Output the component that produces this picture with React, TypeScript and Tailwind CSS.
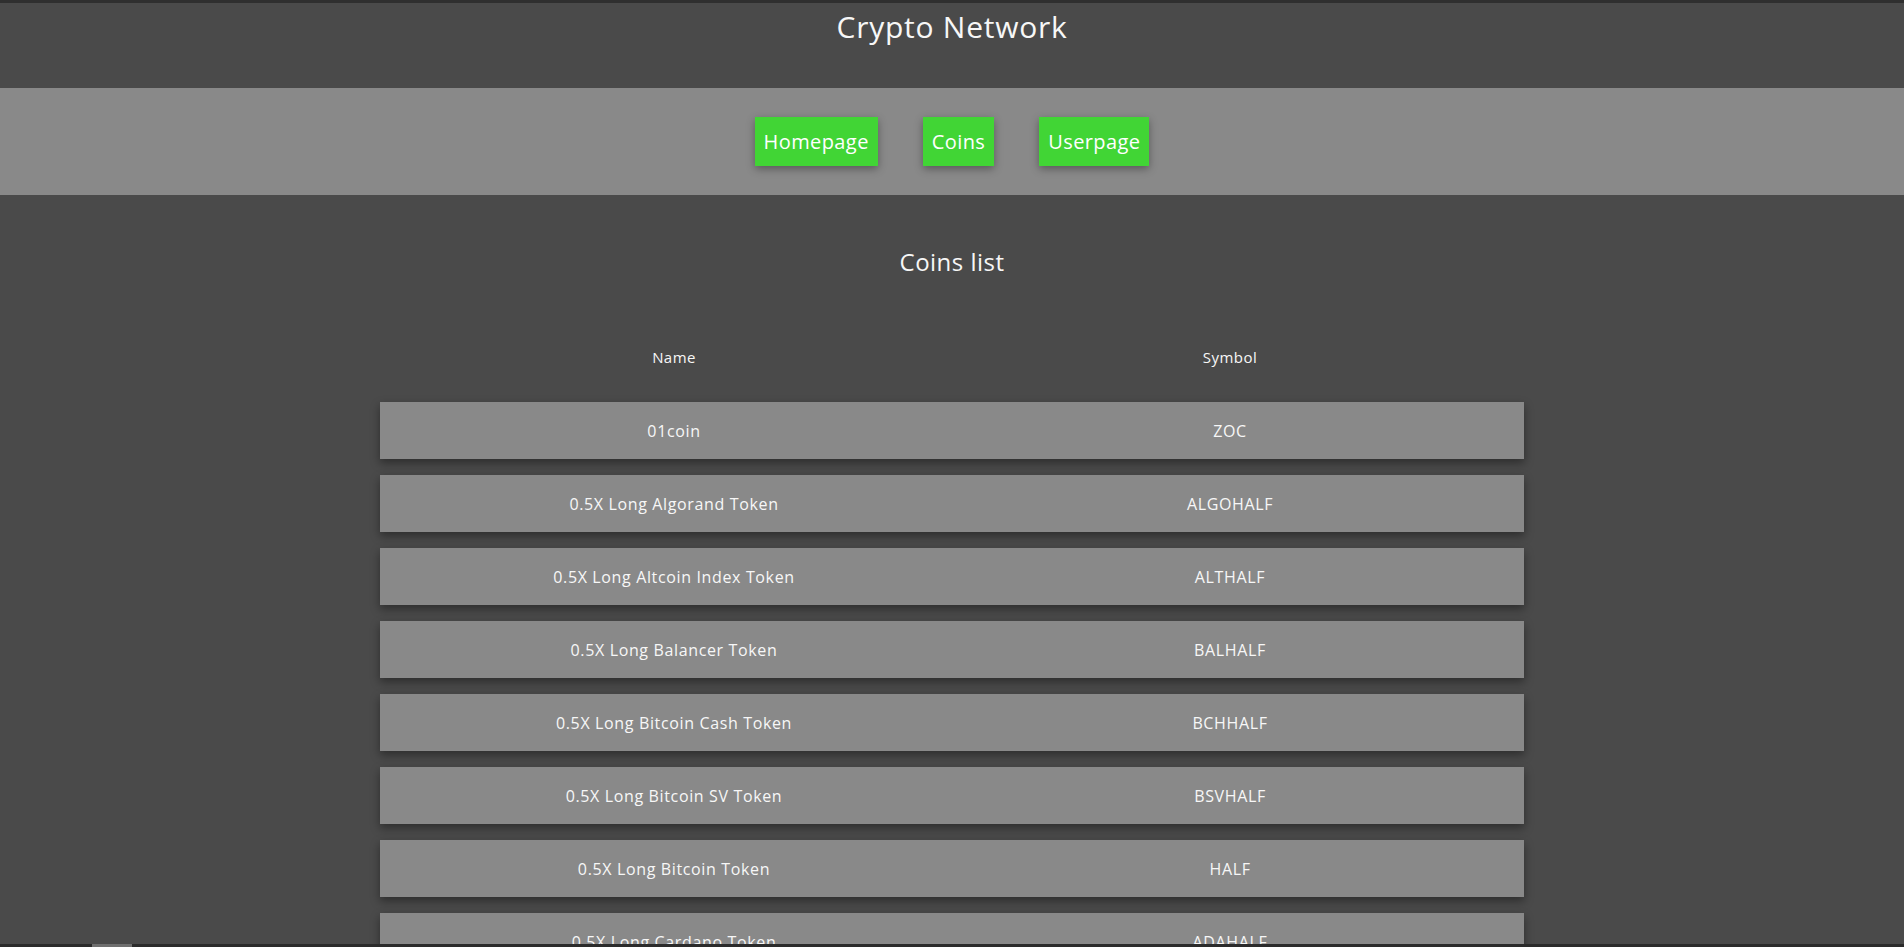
const coins = [
  { name: '01coin', symbol: 'ZOC' },
  { name: '0.5X Long Algorand Token', symbol: 'ALGOHALF' },
  { name: '0.5X Long Altcoin Index Token', symbol: 'ALTHALF' },
  { name: '0.5X Long Balancer Token', symbol: 'BALHALF' },
  { name: '0.5X Long Bitcoin Cash Token', symbol: 'BCHHALF' },
  { name: '0.5X Long Bitcoin SV Token', symbol: 'BSVHALF' },
  { name: '0.5X Long Bitcoin Token', symbol: 'HALF' },
  { name: '0.5X Long Cardano Token', symbol: 'ADAHALF' },
  { name: '0.5X Long Chainlink Token', symbol: 'LINKHALF' },
  { name: '0.5X Long Cosmos Token', symbol: 'ATOMHALF' },
];

const links = ['Homepage', 'Coins', 'Userpage'];

const App = () => {
  return (
    <div className="min-h-screen bg-[#4a4a4a] text-[#f7f7f7] font-['Open_Sans',sans-serif] border-t-[3px] border-[#2f2f2f]">
      <header className="h-[85px] flex justify-center">
        <h1 className="text-[30px] tracking-[0.025em] leading-none pt-[9px]">Crypto Network</h1>
      </header>

      <nav className="h-[107px] bg-[#898989] flex items-center justify-center gap-[45px]">
        {links.map((l) => (
          <a
            key={l}
            className="h-[49px] px-[9px] flex items-center bg-[#41d535] text-[20px] tracking-[0.02em] text-white shadow-[0_3px_8px_rgba(0,0,0,0.35)] cursor-pointer"
          >
            {l}
          </a>
        ))}
      </nav>

      <main className="flex flex-col items-center">
        <h2 className="text-[24px] tracking-[0.02em] mt-[51px] leading-8">Coins list</h2>

        <div className="w-[1144px] mt-[68px] pb-10">
          <div className="grid grid-cols-[588px_1fr] text-[15px] tracking-[0.03em] h-[20px] items-center">
            <div className="text-center">Name</div>
            <div className="text-center pr-[32px]">Symbol</div>
          </div>

          <div className="mt-[36px] flex flex-col gap-[16px]">
            {coins.map((c) => (
              <div
                key={c.symbol}
                className="grid grid-cols-[588px_1fr] h-[57px] items-center bg-[#898989] text-[16px] tracking-[0.04em] shadow-[0_4px_9px_rgba(0,0,0,0.4)]"
              >
                <div className="text-center">{c.name}</div>
                <div className="text-center pr-[32px]">{c.symbol}</div>
              </div>
            ))}
          </div>
        </div>
      </main>

      <div className="fixed bottom-0 left-0 right-0 h-[3px] bg-[#2b2b2b]">
        <div className="ml-[92px] w-[40px] h-full bg-[#6f6f6f]" />
      </div>
    </div>
  );
};

export default App;
